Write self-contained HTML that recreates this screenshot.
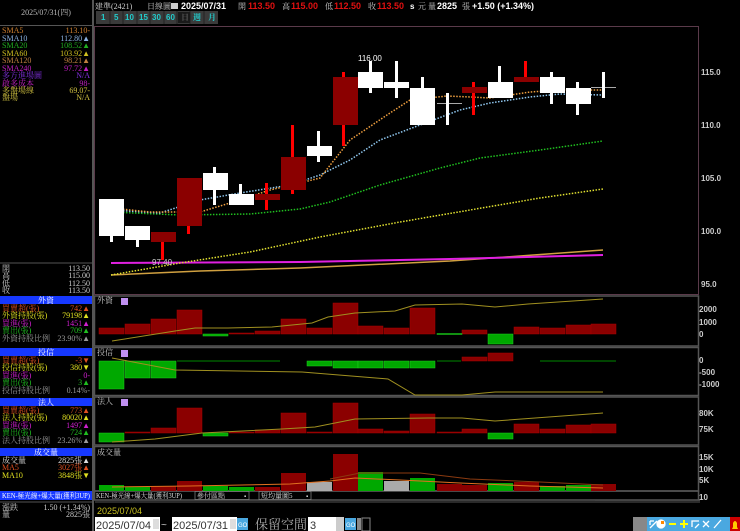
<!DOCTYPE html>
<html><head><meta charset="utf-8"><style>
html,body{margin:0;padding:0;background:#000;width:740px;height:531px;overflow:hidden}
svg{display:block}
text{font-family:"Liberation Serif","Noto Serif CJK SC",serif;font-size:8px}
.s{font-family:"Liberation Sans","Noto Sans CJK SC",sans-serif}
</style></head><body>
<svg width="740" height="531" viewBox="0 0 740 531" xmlns="http://www.w3.org/2000/svg">
<rect width="740" height="531" fill="#000"/>
<!-- left panel -->
<line x1="93" y1="0" x2="93" y2="531" stroke="#555" stroke-width="2"/>
<line x1="0" y1="25.5" x2="93" y2="25.5" stroke="#555"/>
<text x="46" y="15" fill="#bbb" text-anchor="middle">2025/07/31(四)</text>
<g>
<text x="2" y="33" fill="#d08030">SMA5</text><text x="90" y="33" fill="#d08030" text-anchor="end">113.10-</text>
<text x="2" y="41" fill="#8ab0e0">SMA10</text><text x="90" y="41" fill="#8ab0e0" text-anchor="end">112.80▲</text>
<text x="2" y="48" fill="#20b020">SMA20</text><text x="90" y="48" fill="#20b020" text-anchor="end">108.52▲</text>
<text x="2" y="56" fill="#d0c020">SMA60</text><text x="90" y="56" fill="#d0c020" text-anchor="end">103.92▲</text>
<text x="2" y="63" fill="#c08040">SMA120</text><text x="90" y="63" fill="#c08040" text-anchor="end">98.21▲</text>
<text x="2" y="71" fill="#c020c0">SMA240</text><text x="90" y="71" fill="#c020c0" text-anchor="end">97.72▲</text>
<text x="2" y="78" fill="#8030e0">多方進場圖</text><text x="90" y="78" fill="#8030e0" text-anchor="end">N/A</text>
<text x="2" y="86" fill="#c020c0">啟多成本</text><text x="90" y="86" fill="#c020c0" text-anchor="end">98-</text>
<text x="2" y="93" fill="#d0c040">多盤場線</text><text x="90" y="93" fill="#d0c040" text-anchor="end">69.07-</text>
<text x="2" y="100" fill="#d0c040">盤場</text><text x="90" y="100" fill="#d0c040" text-anchor="end">N/A</text>
</g>
<line x1="0" y1="263" x2="93" y2="263" stroke="#555"/>
<g fill="#ccc">
<text x="2" y="271">開</text><text x="90" y="271" text-anchor="end">113.50</text>
<text x="2" y="278">高</text><text x="90" y="278" text-anchor="end">115.00</text>
<text x="2" y="286">低</text><text x="90" y="286" text-anchor="end">112.50</text>
<text x="2" y="293">收</text><text x="90" y="293" text-anchor="end">113.50</text>
</g>
<g>
<rect x="0" y="296" width="92" height="8" fill="#1638ff"/><text x="46" y="303" fill="#fff" text-anchor="middle">外資</text>
<text x="2" y="311" fill="#e05020">買賣超(張)</text><text x="90" y="311" fill="#e05020" text-anchor="end">742▲</text>
<text x="2" y="318" fill="#e0e020">外資持股(張)</text><text x="90" y="318" fill="#e0e020" text-anchor="end">79198▲</text>
<text x="2" y="326" fill="#d020d0">買進(張)</text><text x="90" y="326" fill="#d020d0" text-anchor="end">1451▲</text>
<text x="2" y="333" fill="#20c020">賣出(張)</text><text x="90" y="333" fill="#20c020" text-anchor="end">709▲</text>
<text x="2" y="341" fill="#999">外資持股比例</text><text x="90" y="341" fill="#999" text-anchor="end">23.90%▲</text>
<rect x="0" y="348" width="92" height="8" fill="#1638ff"/><text x="46" y="355" fill="#fff" text-anchor="middle">投信</text>
<text x="2" y="363" fill="#e05020">買賣超(張)</text><text x="90" y="363" fill="#e05020" text-anchor="end">-3▼</text>
<text x="2" y="370" fill="#e0e020">投信持股(張)</text><text x="90" y="370" fill="#e0e020" text-anchor="end">380▼</text>
<text x="2" y="378" fill="#d020d0">買進(張)</text><text x="90" y="378" fill="#d020d0" text-anchor="end">0-</text>
<text x="2" y="385" fill="#20c020">賣出(張)</text><text x="90" y="385" fill="#20c020" text-anchor="end">3▲</text>
<text x="2" y="393" fill="#999">投信持股比例</text><text x="90" y="393" fill="#999" text-anchor="end">0.14%-</text>
<rect x="0" y="398" width="92" height="8" fill="#1638ff"/><text x="46" y="405" fill="#fff" text-anchor="middle">法人</text>
<text x="2" y="413" fill="#e05020">買賣超(張)</text><text x="90" y="413" fill="#e05020" text-anchor="end">773▲</text>
<text x="2" y="420" fill="#e0e020">法人持股(張)</text><text x="90" y="420" fill="#e0e020" text-anchor="end">80020▲</text>
<text x="2" y="428" fill="#d020d0">買進(張)</text><text x="90" y="428" fill="#d020d0" text-anchor="end">1497▲</text>
<text x="2" y="435" fill="#20c020">賣出(張)</text><text x="90" y="435" fill="#20c020" text-anchor="end">724▲</text>
<text x="2" y="443" fill="#999">法人持股比例</text><text x="90" y="443" fill="#999" text-anchor="end">23.26%▲</text>
<rect x="0" y="448" width="92" height="8" fill="#1638ff"/><text x="46" y="455" fill="#fff" text-anchor="middle">成交量</text>
<text x="2" y="463" fill="#ddd">成交量</text><text x="90" y="463" fill="#ddd" text-anchor="end">2825張▲</text>
<text x="2" y="470" fill="#e05020">MA5</text><text x="90" y="470" fill="#e05020" text-anchor="end">3027張▲</text>
<text x="2" y="478" fill="#e0e020">MA10</text><text x="90" y="478" fill="#e0e020" text-anchor="end">3848張▼</text>
<rect x="0" y="491" width="92" height="9" fill="#1638ff"/><text x="2" y="498" fill="#fff" style="font-size:7px" textLength="88" lengthAdjust="spacingAndGlyphs">KEN-極光線+爆大量(獲利3UP)</text>
<line x1="0" y1="502" x2="93" y2="502" stroke="#555"/>
<text x="2" y="510" fill="#ccc">漲跌</text><text x="90" y="510" fill="#ccc" text-anchor="end">1.50 (+1.34%)</text>
<text x="2" y="517" fill="#ccc">量</text><text x="90" y="517" fill="#ccc" text-anchor="end">2825張</text>
</g>
<!-- header -->
<text x="95" y="9" fill="#ccc">建準(2421)</text>
<text x="147" y="9" fill="#ccc">日線圖</text>
<rect x="171" y="3" width="7" height="6" fill="#ccc"/>
<text x="181" y="9" fill="#fff" class="s" font-weight="bold" style="font-size:9px">2025/07/31</text>
<text x="238" y="9" fill="#ccc">開</text><text x="248" y="9" fill="#e01010" class="s" font-weight="bold" style="font-size:9px">113.50</text>
<text x="282" y="9" fill="#ccc">高</text><text x="291" y="9" fill="#e01010" class="s" font-weight="bold" style="font-size:9px">115.00</text>
<text x="325" y="9" fill="#ccc">低</text><text x="334" y="9" fill="#e01010" class="s" font-weight="bold" style="font-size:9px">112.50</text>
<text x="368" y="9" fill="#ccc">收</text><text x="377" y="9" fill="#e01010" class="s" font-weight="bold" style="font-size:9px">113.50</text>
<text x="410" y="9" fill="#fff" class="s" font-weight="bold">s</text><text x="418" y="9" fill="#ccc">元</text>
<text x="428" y="9" fill="#ccc">量</text><text x="437" y="9" fill="#fff" class="s" font-weight="bold" style="font-size:9px">2825</text><text x="462" y="9" fill="#ccc">張</text>
<text x="472" y="9" fill="#fff" class="s" font-weight="bold" style="font-size:9px">+1.50 (+1.34%)</text>
<!-- buttons -->
<g class="s" font-weight="bold" style="font-size:8px" fill="#2cc">
<rect x="96" y="11" width="122" height="13" fill="#3a3a3a"/>
<g stroke="#222"><line x1="110" y1="11" x2="110" y2="24"/><line x1="123" y1="11" x2="123" y2="24"/><line x1="137" y1="11" x2="137" y2="24"/><line x1="150" y1="11" x2="150" y2="24"/><line x1="164" y1="11" x2="164" y2="24"/><line x1="177" y1="11" x2="177" y2="24"/><line x1="190" y1="11" x2="190" y2="24"/><line x1="204" y1="11" x2="204" y2="24"/></g>
<rect x="178" y="12" width="12" height="11" fill="#1a1a1a"/>
<text x="101" y="20" class="s" style="font-size:8px">1</text><text x="114" y="20" class="s" style="font-size:8px">5</text>
<text x="125" y="20" class="s" style="font-size:8px">10</text><text x="139" y="20" class="s" style="font-size:8px">15</text>
<text x="152" y="20" class="s" style="font-size:8px">30</text><text x="166" y="20" class="s" style="font-size:8px">60</text>
<text x="181" y="20" fill="#555">日</text><text x="193" y="20">週</text><text x="208" y="20">月</text>
</g>
<!-- main frame -->
<rect x="94.5" y="26.5" width="604" height="268" fill="none" stroke="#5a3a4a"/>
<g fill="#ccc" class="s" font-weight="bold" style="font-size:8px">
<text x="701" y="75" class="s" style="font-size:8px">115.0</text><text x="701" y="128" class="s" style="font-size:8px">110.0</text>
<text x="701" y="181" class="s" style="font-size:8px">105.0</text><text x="701" y="234" class="s" style="font-size:8px">100.0</text>
<text x="701" y="287" class="s" style="font-size:8px">95.0</text>
<text x="699" y="312" class="s" style="font-size:8px">2000</text><text x="699" y="325" class="s" style="font-size:8px">1000</text><text x="699" y="337" class="s" style="font-size:8px">0</text>
<text x="699" y="363" class="s" style="font-size:8px">0</text><text x="699" y="375" class="s" style="font-size:8px">-500</text><text x="699" y="387" class="s" style="font-size:8px">-1000</text>
<text x="699" y="416" class="s" style="font-size:8px">80K</text><text x="699" y="432" class="s" style="font-size:8px">75K</text>
<text x="699" y="460" class="s" style="font-size:8px">15K</text><text x="699" y="472" class="s" style="font-size:8px">10K</text><text x="699" y="483" class="s" style="font-size:8px">5K</text>
<text x="699" y="500" class="s" style="font-size:8px">10</text>
</g>
<!-- MAs -->
<g fill="none" stroke-width="1.5">
<polyline stroke="#d0a040" points="111,275 200,271 300,268 450,261 603,250"/>
<polyline stroke="#e020e0" stroke-width="2" points="111,263 300,262 450,259 603,255"/>
<polyline stroke="#e0e030" stroke-dasharray="1.5 1.5" points="111,275 180,263 250,252 320,237 400,222 470,210 540,198 603,189"/>
<polyline stroke="#20c020" stroke-dasharray="1.5 1.5" points="111,212 180,215 250,214 300,209 330,202 380,185 440,168 480,158 540,150 603,141"/>
<polyline stroke="#90c8f0" stroke-dasharray="1.5 1.5" points="111,210 160,213 200,200 240,193 290,185 320,175 350,160 380,140 420,125 460,110 490,103 530,97 560,94 603,95"/>
<polyline stroke="#f0a040" stroke-dasharray="1.5 1.5" points="111,208 150,212 200,212 240,200 270,190 300,183 320,178 350,140 390,113 410,100 447,96 470,97 490,98 530,92 560,90 603,90"/>
</g>
<!-- candles -->
<g>
<rect x="110" y="199" width="3" height="43" fill="#fff"/><rect x="99" y="199" width="25" height="37" fill="#fff"/>
<rect x="136" y="226" width="3" height="21" fill="#fff"/><rect x="125" y="226" width="25" height="14" fill="#fff"/>
<rect x="161" y="232" width="3" height="28" fill="#f00"/><rect x="151" y="232" width="25" height="10" fill="#8b0000"/>
<rect x="187" y="178" width="3" height="56" fill="#f00"/><rect x="177" y="178" width="25" height="48" fill="#8b0000"/>
<rect x="213" y="167" width="3" height="38" fill="#fff"/><rect x="203" y="173" width="25" height="17" fill="#fff"/>
<rect x="239" y="184" width="3" height="21" fill="#fff"/><rect x="229" y="194" width="25" height="11" fill="#fff"/>
<rect x="265" y="183" width="3" height="27" fill="#f00"/><rect x="255" y="194" width="25" height="6" fill="#8b0000"/>
<rect x="291" y="125" width="3" height="69" fill="#f00"/><rect x="281" y="157" width="25" height="33" fill="#8b0000"/>
<rect x="317" y="131" width="3" height="31" fill="#fff"/><rect x="307" y="146" width="25" height="10" fill="#fff"/>
<rect x="342" y="72" width="3" height="74" fill="#f00"/><rect x="333" y="77" width="25" height="48" fill="#8b0000"/>
<rect x="369" y="61" width="3" height="32" fill="#fff"/><rect x="358" y="72" width="25" height="16" fill="#fff"/>
<rect x="395" y="61" width="3" height="37" fill="#fff"/><rect x="384" y="82" width="25" height="6" fill="#fff"/>
<rect x="421" y="77" width="3" height="48" fill="#fff"/><rect x="410" y="88" width="25" height="37" fill="#fff"/>
<rect x="437" y="103" width="25" height="1" fill="#aaa"/><rect x="446" y="93" width="3" height="32" fill="#fff"/>
<rect x="472" y="82" width="3" height="33" fill="#f00"/><rect x="462" y="87" width="25" height="6" fill="#8b0000"/>
<rect x="498" y="66" width="3" height="32" fill="#fff"/><rect x="488" y="82" width="25" height="16" fill="#fff"/>
<rect x="524" y="61" width="3" height="21" fill="#f00"/><rect x="514" y="77" width="25" height="5" fill="#8b0000"/>
<rect x="550" y="72" width="3" height="32" fill="#fff"/><rect x="540" y="77" width="25" height="16" fill="#fff"/>
<rect x="576" y="82" width="3" height="33" fill="#fff"/><rect x="566" y="88" width="25" height="16" fill="#fff"/>
<rect x="591" y="87" width="25" height="1" fill="#aaa"/><rect x="602" y="72" width="3" height="26" fill="#fff"/>
</g>
<text x="358" y="61" fill="#fff" class="s" style="font-size:8px">116.00</text>
<text x="152" y="265" fill="#ccc" class="s" style="font-size:8px">97.40</text>
<!-- sub panels frames -->
<g fill="none" stroke="#555" stroke-width="1.5">
<rect x="94.5" y="296" width="604" height="50"/>
<rect x="94.5" y="347.5" width="604" height="48"/>
<rect x="94.5" y="397" width="604" height="48"/>
<rect x="94.5" y="446.5" width="604" height="44.5"/>
<rect x="94.5" y="491" width="604" height="9"/>
</g>
<g fill="#ccc">
<text x="97" y="303">外資</text><text x="97" y="355">投信</text><text x="97" y="404">法人</text><text x="97" y="455">成交量</text>
</g>
<g fill="#c090f0"><rect x="121" y="298" width="7" height="7"/><rect x="121" y="350" width="7" height="7"/><rect x="121" y="399" width="7" height="7"/></g>
<!-- panel1 bars -->
<g fill="#8b0000" stroke="#a00" stroke-width="0.5">
<rect x="99" y="328" width="25" height="6"/><rect x="125" y="324" width="25" height="10"/><rect x="151" y="319" width="25" height="15"/><rect x="177" y="310" width="25" height="24"/>
<rect x="255" y="331" width="25" height="3"/><rect x="281" y="319" width="25" height="15"/><rect x="307" y="328" width="25" height="6"/><rect x="333" y="303" width="25" height="31"/>
<rect x="358" y="326" width="25" height="8"/><rect x="384" y="328" width="25" height="6"/><rect x="410" y="308" width="25" height="26"/><rect x="462" y="330" width="25" height="4"/>
<rect x="514" y="327" width="25" height="7"/><rect x="540" y="328" width="25" height="6"/><rect x="566" y="325" width="25" height="9"/><rect x="591" y="324" width="25" height="10"/>
<rect x="229" y="333" width="25" height="1"/>
</g>
<g fill="#00a800" stroke="#2c2" stroke-width="0.5"><rect x="203" y="334" width="25" height="2"/><rect x="488" y="334" width="25" height="10"/><rect x="437" y="333.5" width="25" height="1"/></g>
<polyline fill="none" stroke="#a09020" points="112,341 175,331 195,328 228,328 272,327 312,323 328,317 355,313 395,311 415,305 462,304 495,307 528,304 603,299"/>
<!-- panel2 -->
<g fill="#00a800" stroke="#2c2" stroke-width="0.5">
<rect x="99" y="361" width="25" height="28"/><rect x="125" y="361" width="25" height="17"/><rect x="151" y="361" width="25" height="17"/>
<rect x="307" y="361" width="25" height="5"/><rect x="333" y="361" width="25" height="7"/><rect x="358" y="361" width="25" height="7"/><rect x="384" y="361" width="25" height="7"/><rect x="410" y="361" width="25" height="7"/>
</g>
<g stroke="#080" stroke-width="1"><line x1="177" y1="361" x2="280" y2="361"/><line x1="437" y1="361" x2="461" y2="361"/><line x1="540" y1="361" x2="616" y2="361"/></g>
<g fill="#8b0000" stroke="#a00" stroke-width="0.5"><rect x="462" y="357" width="25" height="4"/><rect x="488" y="353" width="25" height="8"/></g>
<polyline fill="none" stroke="#a09020" points="112,358 175,370 302,372 388,379 415,395 462,395 495,392 603,392"/>
<!-- panel3 -->
<g fill="#8b0000" stroke="#a00" stroke-width="0.5">
<rect x="151" y="428" width="25" height="5"/><rect x="177" y="408" width="25" height="25"/><rect x="255" y="430" width="25" height="3"/><rect x="281" y="413" width="25" height="20"/>
<rect x="333" y="403" width="25" height="30"/><rect x="358" y="429" width="25" height="4"/><rect x="384" y="431" width="25" height="2"/><rect x="410" y="414" width="25" height="19"/>
<rect x="462" y="429" width="25" height="4"/><rect x="514" y="424" width="25" height="9"/><rect x="540" y="429" width="25" height="4"/><rect x="566" y="425" width="25" height="8"/><rect x="591" y="424" width="25" height="9"/>
<rect x="125" y="432" width="25" height="1"/><rect x="229" y="432" width="25" height="1"/><rect x="307" y="432" width="25" height="1"/><rect x="437" y="432" width="25" height="1"/>
</g>
<g fill="#00a800" stroke="#2c2" stroke-width="0.5"><rect x="99" y="433" width="25" height="9"/><rect x="203" y="433" width="25" height="3"/><rect x="488" y="433" width="25" height="6"/></g>
<polyline fill="none" stroke="#a09020" points="112,442 155,439 202,433 282,429 315,427 355,419 428,418 462,418 495,421 603,413"/>
<!-- panel4 volume -->
<g stroke-width="0.5">
<rect x="99" y="485" width="25" height="6" fill="#00a800"/><rect x="125" y="487" width="25" height="4" fill="#00a800"/><rect x="151" y="486" width="25" height="5" fill="#8b0000"/><rect x="177" y="481" width="25" height="10" fill="#8b0000"/>
<rect x="203" y="486" width="25" height="5" fill="#00a800"/><rect x="229" y="487" width="25" height="4" fill="#00a800"/><rect x="255" y="487" width="25" height="4" fill="#8b0000"/><rect x="281" y="473" width="25" height="18" fill="#8b0000"/>
<rect x="307" y="482" width="25" height="9" fill="#aaa"/><rect x="333" y="454" width="25" height="37" fill="#8b0000"/><rect x="358" y="472" width="25" height="19" fill="#00a800"/><rect x="384" y="481" width="25" height="10" fill="#aaa"/>
<rect x="410" y="478" width="25" height="13" fill="#00a800"/><rect x="437" y="484" width="25" height="7" fill="#8b0000"/><rect x="462" y="485" width="25" height="6" fill="#8b0000"/><rect x="488" y="483" width="25" height="8" fill="#00a800"/>
<rect x="514" y="482" width="25" height="9" fill="#8b0000"/><rect x="540" y="486" width="25" height="5" fill="#00a800"/><rect x="566" y="485" width="25" height="6" fill="#00a800"/><rect x="591" y="484" width="25" height="7" fill="#8b0000"/>
</g>
<polyline fill="none" stroke="#8b3a10" points="330,479 360,473 420,473 470,479 540,482 603,485"/>
<polyline fill="none" stroke="#e07020" points="112,487 190,486 290,484 330,481 355,478 400,480 460,483 530,486 603,488"/>
<!-- bottom row -->
<text x="96" y="498" fill="#ddd" style="font-size:7px" textLength="86" lengthAdjust="spacingAndGlyphs">KEN-極光線+爆大量(獲利3UP)</text>
<rect x="195" y="491.5" width="54" height="8" fill="#000" stroke="#888" stroke-width="0.7"/><text x="197" y="498" fill="#ddd" style="font-size:7px">參付區點</text><text x="244" y="498" fill="#ddd" style="font-size:6px">▪</text>
<rect x="259" y="491.5" width="52" height="8" fill="#000" stroke="#888" stroke-width="0.7"/><text x="261" y="498" fill="#ddd" style="font-size:7px">短均量圖5</text><text x="306" y="498" fill="#ddd" style="font-size:6px">▪</text>
<line x1="95" y1="502" x2="700" y2="502" stroke="#555"/>
<text x="97" y="514" fill="#c8c020" class="s" style="font-size:9px">2025/07/04</text>
<rect x="95" y="517" width="65" height="14" fill="#fff"/><text x="96" y="529" fill="#333" class="s" style="font-size:11px">2025/07/04</text>
<rect x="153" y="519" width="6" height="10" fill="#ddd"/>
<text x="161" y="528" fill="#ccc" class="s" style="font-size:10px">~</text>
<rect x="172" y="517" width="65" height="14" fill="#fff"/><text x="173" y="529" fill="#333" class="s" style="font-size:11px">2025/07/31</text>
<rect x="230" y="519" width="6" height="10" fill="#ddd"/>
<rect x="237" y="518" width="11" height="12" fill="#4aa8e0"/><text x="238" y="527" fill="#fff" class="s" style="font-size:6px">GO</text>
<text x="255" y="529" fill="#aaa" style="font-size:13px">保留空間</text>
<rect x="308" y="517" width="28" height="14" fill="#fff"/><text x="310" y="529" fill="#333" class="s" style="font-size:11px">3</text>
<rect x="336" y="517" width="8" height="14" fill="#ccc"/>
<rect x="345" y="518" width="11" height="12" fill="#4aa8e0"/><text x="346" y="527" fill="#fff" class="s" style="font-size:6px">GO</text>
<rect x="357" y="518" width="4" height="12" fill="#888"/>
<rect x="362" y="518" width="8" height="13" fill="#000" stroke="#888"/>
<!-- toolbar -->
<rect x="595" y="500" width="105" height="1" fill="#444"/>
<rect x="633" y="517" width="14" height="14" fill="#888"/>
<rect x="647" y="517" width="83" height="14" fill="#4aa8e0"/>
<g stroke="#fff" stroke-width="1.3" fill="none">
<path d="M650 528 L657 521 M650 521 L650 525 M650 521 L654 521"/>
<circle cx="661" cy="524" r="4" fill="#fff"/>
<path d="M669 524 L676 524" stroke="#ff0" stroke-width="2"/>
<path d="M680 524 L688 524 M684 520 L684 528" stroke="#ff0" stroke-width="2"/>
<path d="M692 527 L692 521 L699 521 M695 528 L699 524"/>
<path d="M703 521 L709 527 M709 521 L703 527"/>
<path d="M714 528 L721 520"/>
</g>
<rect x="661" y="521" width="3" height="3" fill="#f80"/>
<rect x="730" y="517" width="10" height="14" fill="#c00"/>
<path d="M732 529 L738 529 L737 527 L737 523 Q735 519 733 523 L733 527 Z" fill="#fc0"/>
</svg>
</body></html>
